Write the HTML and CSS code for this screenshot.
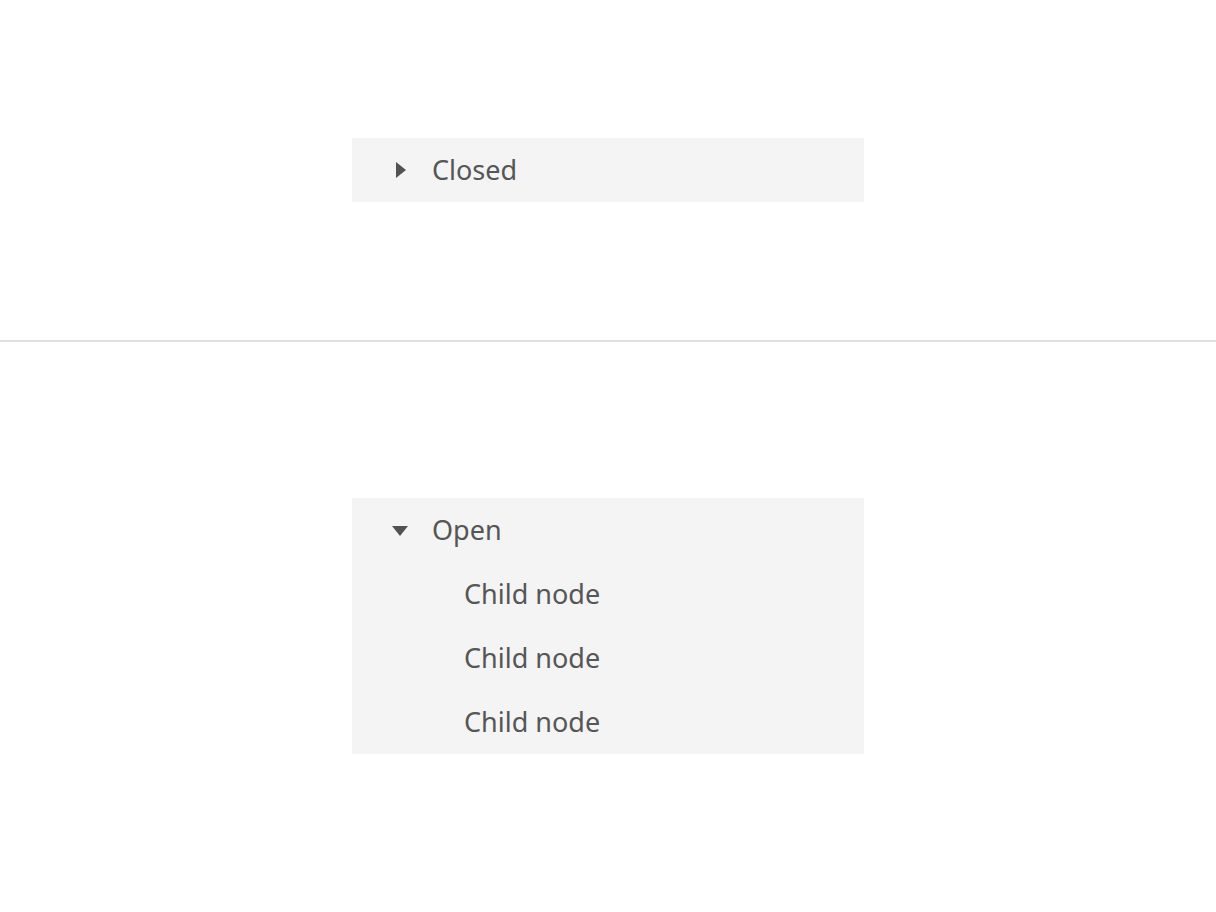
FILE: index.html
```html
<!DOCTYPE html>
<html lang="en">
<head>
<meta charset="utf-8">
<title>Tree view</title>
<link rel="stylesheet" href="styles.css">
</head>
<body>
<section class="stage stage-top">
  <ul class="tree">
    <li class="node">
      <div class="row">
        <svg class="caret" viewBox="0 0 16 16" width="32" height="32" aria-hidden="true"><path d="M6 4L11 8L6 12Z"/></svg>
        <span class="label">Closed</span>
      </div>
    </li>
  </ul>
</section>
<hr class="divider">
<section class="stage stage-bottom">
  <ul class="tree">
    <li class="node">
      <div class="row">
        <svg class="caret" viewBox="0 0 16 16" width="32" height="32" aria-hidden="true"><path d="M4 6L12 6L8 11Z"/></svg>
        <span class="label">Open</span>
      </div>
      <ul class="children">
        <li class="row child"><span class="label">Child node</span></li>
        <li class="row child"><span class="label">Child node</span></li>
        <li class="row child"><span class="label">Child node</span></li>
      </ul>
    </li>
  </ul>
</section>
</body>
</html>
```
FILE: styles.css
```css
html, body {
  margin: 0;
  padding: 0;
  background: #ffffff;
}
body {
  font-family: "Noto Sans", "Open Sans", sans-serif;
  color: #525252;
}
.stage {
  display: flex;
  justify-content: center;
}
.stage-top {
  height: 340px;
  align-items: center;
}
.stage-bottom {
  padding-top: 156px;
}
.divider {
  margin: 0;
  border: 0;
  height: 2px;
  background: #e0e0e0;
}
.tree, .children {
  list-style: none;
  margin: 0;
  padding: 0;
}
.tree {
  width: 512px;
  background: #f4f4f4;
}
.row {
  display: flex;
  align-items: center;
  height: 64px;
  padding-left: 32px;
  box-sizing: border-box;
}
.caret {
  flex: none;
  fill: #525252;
  margin-right: 16px;
}
.child {
  padding-left: 112px;
}
.label {
  font-size: 27px;
  line-height: 1;
  letter-spacing: 0;
  color: #565656;
  position: relative;
  top: -1px;
}
```
